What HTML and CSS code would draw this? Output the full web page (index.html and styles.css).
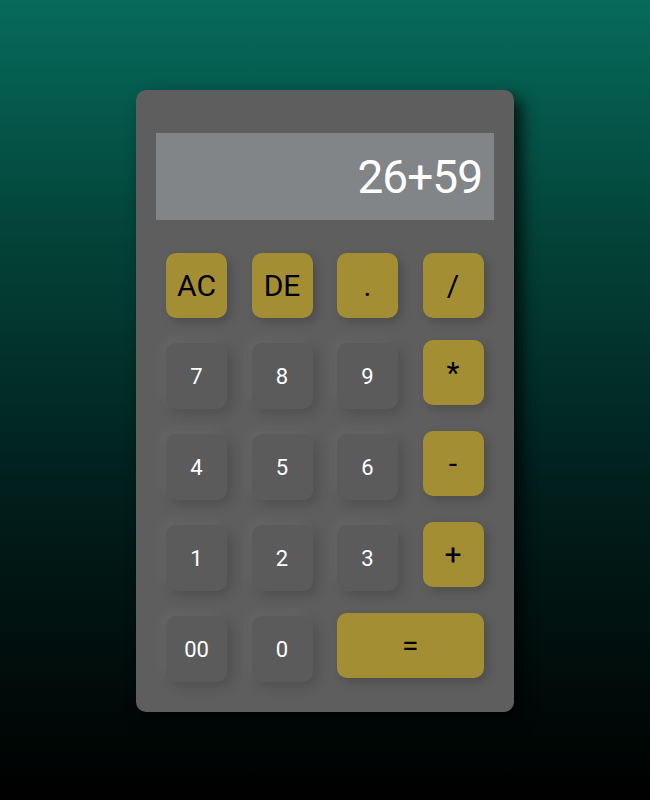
FILE: index.html
```html
<!DOCTYPE html>
<html lang="en">
<head>
<meta charset="utf-8">
<title>Calculator</title>
<link rel="stylesheet" href="styles.css">
</head>
<body>
<div class="calculator">
  <div class="display">26+59</div>
  <div class="keys">
    <button class="key op">AC</button>
    <button class="key op">DE</button>
    <button class="key op">.</button>
    <button class="key op">/</button>
    <button class="key num">7</button>
    <button class="key num">8</button>
    <button class="key num">9</button>
    <button class="key op">*</button>
    <button class="key num">4</button>
    <button class="key num">5</button>
    <button class="key num">6</button>
    <button class="key op">-</button>
    <button class="key num">1</button>
    <button class="key num">2</button>
    <button class="key num">3</button>
    <button class="key op">+</button>
    <button class="key num">00</button>
    <button class="key num">0</button>
    <button class="key op wide">=</button>
  </div>
</div>
</body>
</html>
```
FILE: styles.css
```css
html, body {
  margin: 0;
  height: 100%;
}
body {
  box-sizing: border-box;
  padding-top: 2px;
  background: linear-gradient(180deg, #066b5b 0%, #034238 30%, #01201c 60%, #000 100%);
  display: flex;
  align-items: center;
  justify-content: center;
  font-family: Roboto, "Liberation Sans", sans-serif;
}
.calculator {
  width: 378px;
  height: 622px;
  box-sizing: border-box;
  background: #5e5e5e;
  border-radius: 10px;
  padding: 43px 20px 0;
  box-shadow: 8px 8px 16px rgba(0, 0, 0, 0.75);
}
.display {
  height: 87px;
  background: #818587;
  color: #fff;
  font-size: 46px;
  display: flex;
  align-items: center;
  justify-content: flex-end;
  padding-right: 12px;
  letter-spacing: -1px;
}
.keys {
  margin-top: 33px;
  padding: 0 10px;
  display: grid;
  grid-template-columns: repeat(4, 61px);
  column-gap: 24.5px;
  row-gap: 22px;
  align-items: start;
}
.key {
  border: none;
  border-radius: 10px;
  font-family: Roboto, "Liberation Sans", sans-serif;
  padding: 0;
  display: flex;
  align-items: center;
  justify-content: center;
}
.op {
  height: 65px;
  background: #a48e34;
  color: #000;
  font-size: 30px;
  box-shadow: 4px 4px 10px rgba(0, 0, 0, 0.18);
}
.num {
  height: 66px;
  margin-top: 3px;
  background: #5b5b5b;
  color: #fff;
  font-size: 22px;
  box-shadow: -5px -5px 12px rgba(255, 255, 255, 0.05), 5px 5px 12px rgba(0, 0, 0, 0.15);
}
.wide {
  grid-column: span 2;
}
```
